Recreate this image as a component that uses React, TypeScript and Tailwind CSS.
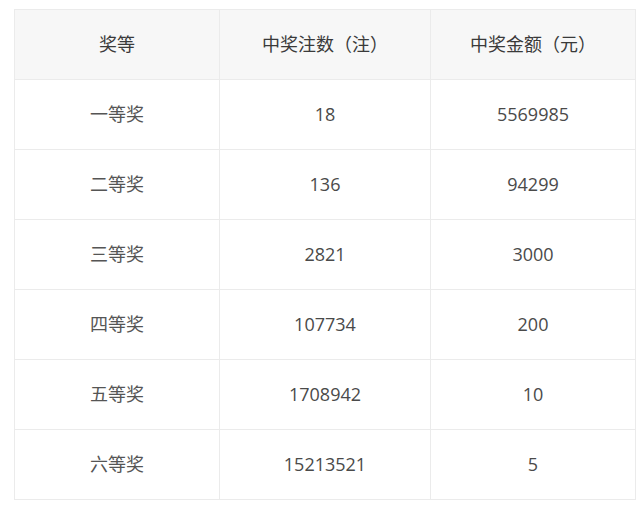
const rows = [
  ['一等奖', '18', '5569985'],
  ['二等奖', '136', '94299'],
  ['三等奖', '2821', '3000'],
  ['四等奖', '107734', '200'],
  ['五等奖', '1708942', '10'],
  ['六等奖', '15213521', '5'],
]

export default function App() {
  return (
    <div
      className="w-[640px] h-[507px] bg-white pt-[9px] pl-[14px]"
      style={{ fontFamily: '"Open Sans", "Noto Sans CJK SC", sans-serif' }}
    >
      <table className="w-[621px] border-collapse table-fixed text-[18px] text-[#4a4a4a]">
        <colgroup>
          <col className="w-[205px]" />
          <col className="w-[211px]" />
          <col className="w-[205px]" />
        </colgroup>
        <thead>
          <tr className="h-[70px] bg-[#f7f7f7] text-[#3a3a3a]">
            <th className="border border-[#ebebeb] font-normal text-center">奖等</th>
            <th className="border border-[#ebebeb] font-normal text-center">中奖注数（注）</th>
            <th className="border border-[#ebebeb] font-normal text-center">中奖金额（元）</th>
          </tr>
        </thead>
        <tbody>
          {rows.map(r => (
            <tr key={r[0]} className="h-[70px]">
              <td className="border border-[#ebebeb] text-center text-[#555]">{r[0]}</td>
              <td className="border border-[#ebebeb] text-center">{r[1]}</td>
              <td className="border border-[#ebebeb] text-center">{r[2]}</td>
            </tr>
          ))}
        </tbody>
      </table>
    </div>
  )
}
